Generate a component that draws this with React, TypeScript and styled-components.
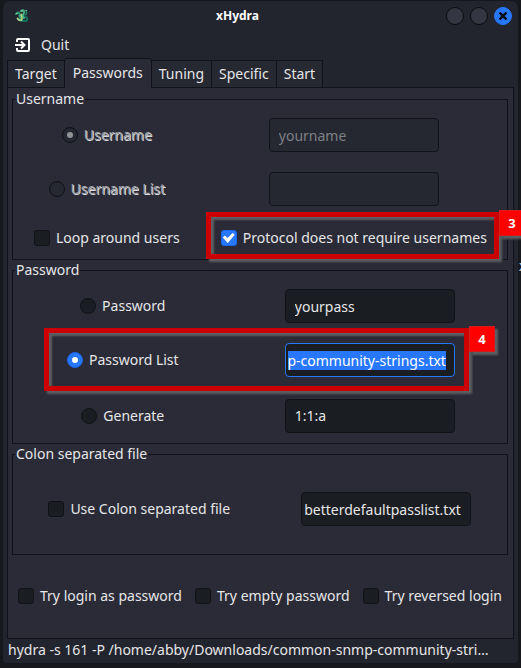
import React, { useEffect, useRef } from "react";
import styled, { createGlobalStyle, css } from "styled-components";

const line = "#11131b";
const blue = "#2777ff";

const GlobalStyle = createGlobalStyle`
  * { box-sizing: border-box; }
  body { margin: 0; background: #17181e; }
  body, button, input { font: 14px/20px "Noto Sans", sans-serif; color: #e6e6e8; }
`;

const Desktop = styled.div`
  position: relative;
  min-height: 100vh;
  padding: 1px 3px 5px;
  display: flex;
  overflow: hidden;
`;

const BackgroundText = styled.span`
  position: absolute;
  top: 256px;
  right: -6px;
  font: 14px/20px "DejaVu Sans Mono", monospace;
  color: #b9c9e6;
`;

const Window = styled.main`
  flex: 1;
  min-width: 0;
  display: flex;
  flex-direction: column;
  padding: 0 4px;
  background: #23252e;
  border-radius: 7px 7px 4px 4px;
`;

const TitleBar = styled.header`
  display: grid;
  grid-template-columns: auto 1fr auto;
  align-items: center;
  height: 30px;
  padding: 0 2px 0 8px;
`;

const Title = styled.h1`
  margin: 0;
  font-size: 12px;
  line-height: 20px;
  font-weight: 700;
  text-align: center;
  color: #fff;
`;

const WindowButtons = styled.div`
  display: flex;
  justify-content: flex-end;
  gap: 6px;
`;

const WindowButton = styled.button<{ $close?: boolean }>`
  display: grid;
  place-items: center;
  width: 18px;
  height: 18px;
  padding: 0;
  border-radius: 50%;
  border: 1px solid ${(p) => (p.$close ? blue : "#0a0b0f")};
  background: ${(p) => (p.$close ? blue : "#343743")};
`;

const MenuBar = styled.nav`
  display: flex;
  height: 27px;
`;

const MenuButton = styled.button`
  display: flex;
  align-items: center;
  gap: 11px;
  padding: 0 8px;
  border: 0;
  background: none;
`;

const Tabs = styled.div`
  display: flex;
  align-items: flex-end;
`;

const Tab = styled.button<{ $active?: boolean }>`
  height: 27px;
  padding: 0 7px;
  margin-right: -1px;
  border: 1px solid ${line};
  border-bottom: 0;
  background: #262832;
  ${(p) =>
    p.$active &&
    css`
      height: 30px;
      margin-bottom: -1px;
      padding: 0 8px 2px;
      border-radius: 3px 3px 0 0;
      background: #2a2b36;
      z-index: 1;
    `}
`;

const Page = styled.form`
  flex: 1;
  display: flex;
  flex-direction: column;
  padding: 1px 5px 0 4px;
  border: 1px solid ${line};
  background: #2a2b36;
`;

const Group = styled.fieldset`
  margin: 0;
  padding: 0;
  min-width: 0;
  border: 1px solid ${line};
`;

const Legend = styled.legend`
  margin-left: 2px;
  padding: 0 1px;
`;

const Row = styled.div<{ $cols: string; $height: number }>`
  position: relative;
  display: grid;
  grid-template-columns: ${(p) => p.$cols};
  min-height: ${(p) => p.$height}px;
`;

const Cell = styled.div`
  position: relative;
  display: flex;
  align-items: center;
  justify-content: center;
`;

const ChoiceLabel = styled.label<{ $off?: boolean }>`
  display: flex;
  align-items: center;
  gap: 6px;
  white-space: nowrap;
  ${(p) =>
    p.$off &&
    css`
      color: #a3a5aa;
      text-shadow: 1px 1px 0 #d6d8dc;
    `}
`;

const Mark = styled.input`
  appearance: none;
  display: grid;
  place-items: center;
  flex: none;
  width: 16px;
  height: 16px;
  margin: 0;
  border: 1px solid #101216;
  border-radius: ${(p) => (p.type === "radio" ? "50%" : "3px")};
  background: #1a1d21;
  &:disabled { background: #252731; }
  &:checked:enabled { background: ${blue}; border-color: #1c66ee; }
  &[type="radio"]:checked::after {
    content: "";
    width: 6px;
    height: 6px;
    border-radius: 50%;
    background: #fff;
  }
  &[type="radio"]:checked:disabled::after { background: #919396; }
  &[type="checkbox"]:checked::after {
    content: "";
    width: 12px;
    height: 10px;
    background: #fff;
    clip-path: polygon(0 45%, 18% 25%, 40% 50%, 82% 0, 100% 18%, 42% 100%);
  }
`;

const TextField = styled.input<{ $tight?: boolean }>`
  width: 170px;
  height: 34px;
  padding: ${(p) => (p.$tight ? "0 8px 0 2px" : "0 9px")};
  border: 1px solid #101216;
  border-radius: 4px;
  outline: 0;
  background: #1a1d21;
  &:disabled {
    background: #252731;
    border-color: ${line};
    color: #7e8085;
  }
  &:focus {
    border-color: ${blue};
    padding: 0 8px 0 2px;
  }
  &::selection { background: ${blue}; color: #fff; }
`;

const Options = styled.div`
  flex: 1;
  display: flex;
  flex-wrap: wrap;
  align-items: center;
  justify-content: space-between;
  min-height: 80px;
  padding: 0 6px 2px;
`;

const Status = styled.footer`
  height: 24px;
  padding: 1px;
  overflow: hidden;
  white-space: nowrap;
  text-overflow: ellipsis;
`;

const Callout = styled.div<{ $inset: string }>`
  position: absolute;
  inset: ${(p) => p.$inset};
  border: 5px solid #cc0000;
  box-shadow: 3px 3px 2px #5d5e61, inset 3px 3px 2px #5d5e61;
  pointer-events: none;
  z-index: 2;
`;

const Badge = styled.span`
  position: absolute;
  top: -7px;
  left: calc(100% + 5px);
  width: 26px;
  height: 26px;
  border: 1px solid #d31b1b;
  background: #fe0000;
  color: #fff;
  font: 700 13px/24px "Open Sans", sans-serif;
  text-align: center;
  box-shadow: 3px 3px 2px #5d5e61;
`;

function Choice({ label, ...rest }: { label: string } & React.ComponentProps<"input">) {
  return (
    <ChoiceLabel $off={rest.disabled}>
      <Mark {...rest} />
      {label}
    </ChoiceLabel>
  );
}

function HydraIcon() {
  return (
    <svg width="14" height="14" viewBox="0 0 14 14" fill="none" strokeLinecap="round">
      <path d="M10 8C13 8 13 12 10 12S6 12 5 11" stroke="#14705f" strokeWidth="2" />
      <path d="M1 5C3 2 5 4 4.5 6S5 9 6 10" stroke="#2f9472" strokeWidth="2" />
      <path d="M6 2C9 0 10 3 8.5 5S8 8 9 9" stroke="#3fae80" strokeWidth="2" />
      <path d="M11 2C12.5 4 11 6 10 6" stroke="#1f8068" strokeWidth="1.5" />
      <path d="M2.5 9.5C4 12 7 12 7 9.5S5 7 6.5 5.5" stroke="#a6d488" strokeWidth="1.8" />
      <path d="M6 2H7.5M1.5 4.5H2.5M11 1.5H11.5" stroke="#83d3a4" />
    </svg>
  );
}

function QuitIcon() {
  return (
    <svg width="15" height="14" viewBox="0 0 15 14" fill="none" stroke="#fff" strokeWidth="2">
      <path d="M2 4V2Q2 1 3 1H13Q14 1 14 2V12Q14 13 13 13H3Q2 13 2 12V10" />
      <path d="M0 7H9M6 3.5L9.5 7L6 10.5" />
    </svg>
  );
}

const userCols = "188fr 307fr";
const passCols = "220fr 275fr";

export default function App() {
  const listRef = useRef<HTMLInputElement>(null);
  useEffect(() => {
    const el = listRef.current;
    if (!el) return;
    el.focus();
    el.select();
    el.scrollLeft = el.scrollWidth;
  }, []);

  return (
    <Desktop>
      <GlobalStyle />
      <BackgroundText aria-hidden>x</BackgroundText>
      <Window>
        <TitleBar>
          <HydraIcon />
          <Title>xHydra</Title>
          <WindowButtons>
            <WindowButton aria-label="Minimize" />
            <WindowButton aria-label="Maximize" />
            <WindowButton $close aria-label="Close">
              <svg width="8" height="8" viewBox="0 0 8 8" stroke="#0b0d14" strokeWidth="2.4">
                <path d="M0.5 0.5L7.5 7.5M7.5 0.5L0.5 7.5" />
              </svg>
            </WindowButton>
          </WindowButtons>
        </TitleBar>
        <MenuBar>
          <MenuButton>
            <QuitIcon />
            Quit
          </MenuButton>
        </MenuBar>
        <Tabs role="tablist">
          {["Target", "Passwords", "Tuning", "Specific", "Start"].map((name) => (
            <Tab key={name} role="tab" aria-selected={name === "Passwords"} $active={name === "Passwords"}>
              {name}
            </Tab>
          ))}
        </Tabs>
        <Page>
          <Group>
            <Legend>Username</Legend>
            <Row $cols={userCols} $height={52}>
              <Cell><Choice type="radio" name="user" label="Username" defaultChecked disabled /></Cell>
              <Cell><TextField aria-label="Username" defaultValue="yourname" disabled /></Cell>
            </Row>
            <Row $cols={userCols} $height={56}>
              <Cell><Choice type="radio" name="user" label="Username List" disabled /></Cell>
              <Cell><TextField aria-label="Username list" disabled /></Cell>
            </Row>
            <Row $cols={userCols} $height={42}>
              <Cell><Choice type="checkbox" label="Loop around users" /></Cell>
              <Cell>
                <Choice type="checkbox" label="Protocol does not require usernames" defaultChecked />
                <Callout $inset="-5px 8px 0 5px"><Badge>3</Badge></Callout>
              </Cell>
            </Row>
          </Group>
          <Group>
            <Legend>Password</Legend>
            <Row $cols={passCols} $height={52}>
              <Cell><Choice type="radio" name="pass" label="Password" /></Cell>
              <Cell><TextField aria-label="Password" defaultValue="yourpass" /></Cell>
            </Row>
            <Row $cols={passCols} $height={56}>
              <Cell><Choice type="radio" name="pass" label="Password List" defaultChecked /></Cell>
              <Cell>
                <TextField
                  ref={listRef}
                  aria-label="Password list"
                  defaultValue="/home/abby/Downloads/common-snmp-community-strings.txt"
                />
              </Cell>
              <Callout $inset="-4px 38px -3px 31px"><Badge>4</Badge></Callout>
            </Row>
            <Row $cols={passCols} $height={55}>
              <Cell><Choice type="radio" name="pass" label="Generate" /></Cell>
              <Cell><TextField aria-label="Generate" defaultValue="1:1:a" /></Cell>
            </Row>
          </Group>
          <Group>
            <Legend>Colon separated file</Legend>
            <Row $cols="253fr 242fr" $height={90}>
              <Cell><Choice type="checkbox" label="Use Colon separated file" /></Cell>
              <Cell><TextField $tight aria-label="Colon separated file" defaultValue="betterdefaultpasslist.txt" /></Cell>
            </Row>
          </Group>
          <Options>
            <Choice type="checkbox" label="Try login as password" />
            <Choice type="checkbox" label="Try empty password" />
            <Choice type="checkbox" label="Try reversed login" />
          </Options>
        </Page>
        <Status>hydra -s 161 -P /home/abby/Downloads/common-snmp-community-stri…</Status>
      </Window>
    </Desktop>
  );
}
